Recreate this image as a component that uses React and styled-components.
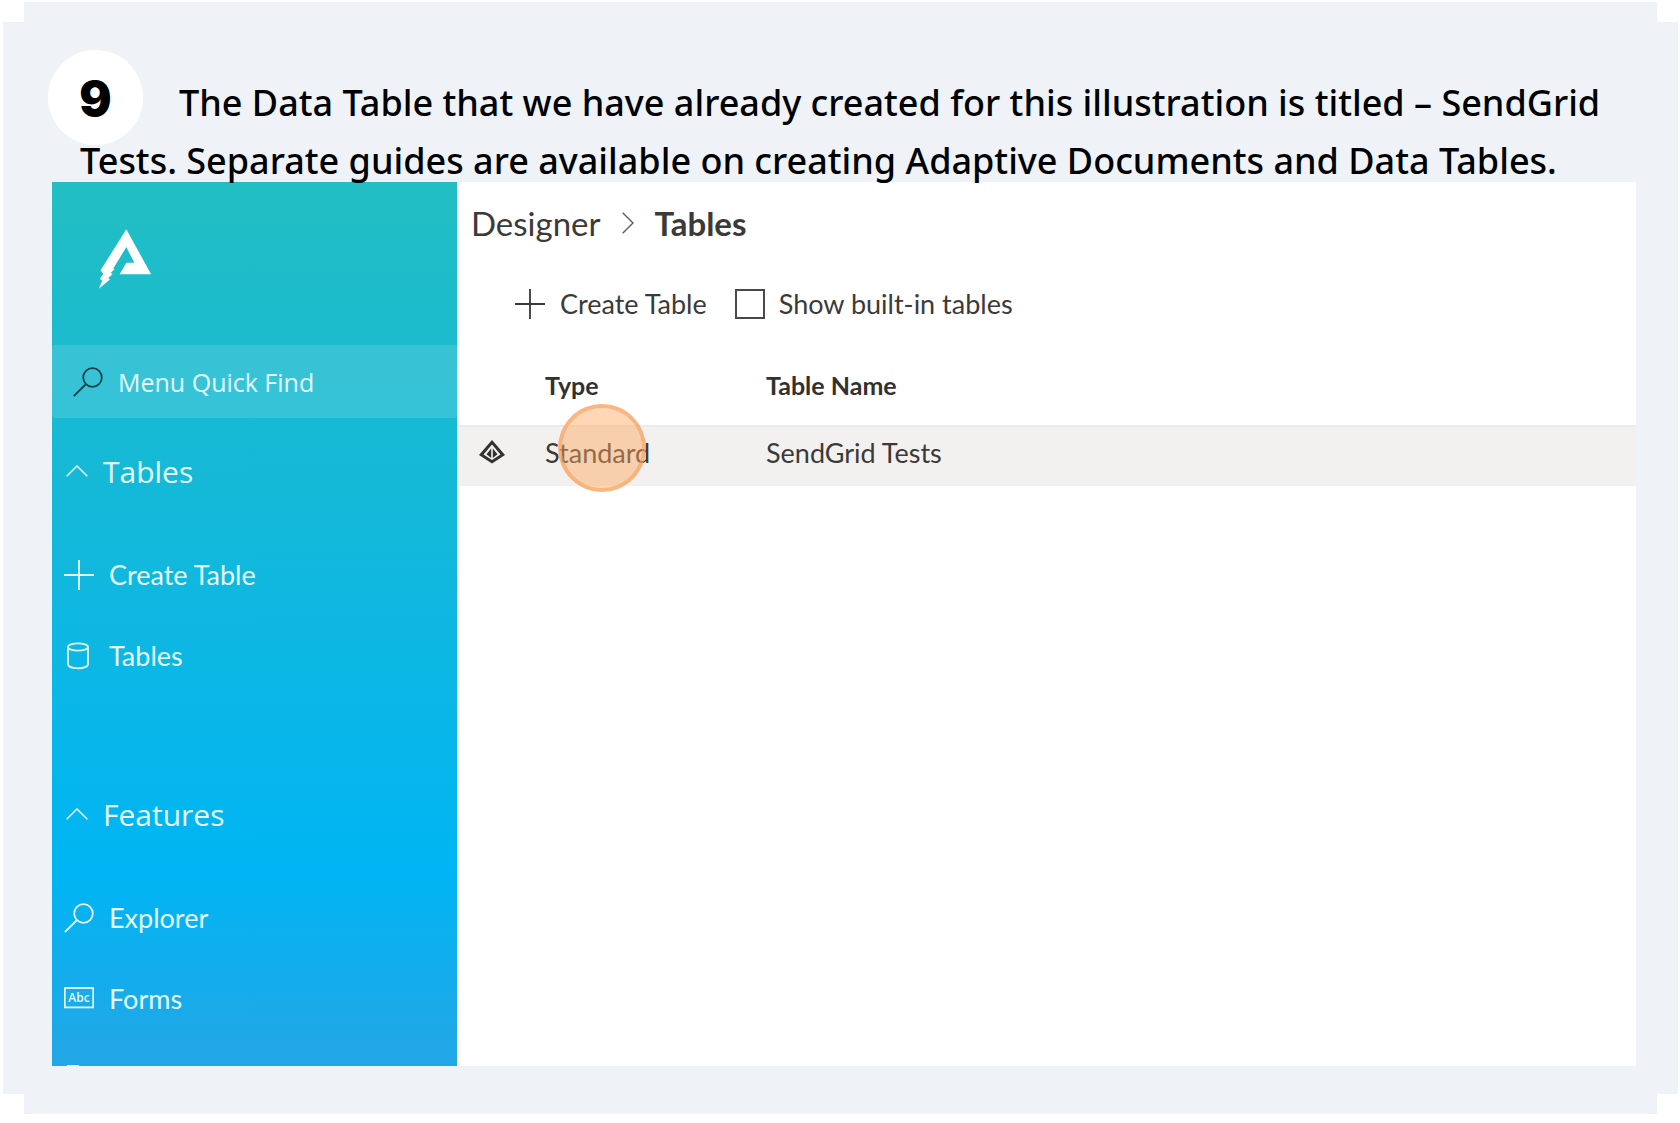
import React, { useState } from 'react';
import styled, { createGlobalStyle } from 'styled-components';

const GlobalStyle = createGlobalStyle`
  * {
    box-sizing: border-box;
  }

  body {
    margin: 0;
    background: #ffffff;
    font-family: Lato, 'Liberation Sans', sans-serif;
    overflow: hidden;
  }
`;

const menu = [
  {
    title: 'Tables',
    items: [
      { name: 'Create Table', icon: 'plus' },
      { name: 'Tables', icon: 'database' },
    ],
  },
  {
    title: 'Features',
    items: [
      { name: 'Explorer', icon: 'search' },
      { name: 'Forms', icon: 'form' },
      { name: '', icon: 'page' },
    ],
  },
];

const rows = [{ type: 'Standard', name: 'SendGrid Tests' }];

function Icon({ name }) {
  return (
    <SIcon viewBox="0 0 30 30" aria-hidden="true">
      {name === 'plus' && <path d="M15 0V30M0 15H30" />}
      {name === 'search' && (
        <>
          <circle cx="19.5" cy="10.5" r="9.3" />
          <path d="M13 17L0.8 29.2" />
        </>
      )}
      {name === 'database' && (
        <>
          <ellipse cx="14" cy="6" rx="10" ry="3.6" />
          <path d="M4 6V23C4 25.5 8 27.3 14 27.3S24 25.5 24 23V6" />
        </>
      )}
      {name === 'form' && (
        <>
          <rect x="0.8" y="4" width="28.4" height="19.4" />
          <text x="15" y="18">
            Abc
          </text>
        </>
      )}
      {name === 'page' && <path d="M4 29V0.8H14L24 10V29Z" />}
    </SIcon>
  );
}

function Logo() {
  return (
    <SLogo viewBox="176 149 158 179" role="img" aria-label="Home">
      <path d="M259 150L333 284H239L259 250H283L259 203L220 267L224 268L212 280L218 283L205 295L210 300L177 327L187 303L180 298L190 283L182 272Z" />
    </SLogo>
  );
}

function MenuGroup({ title, items }) {
  const [open, setOpen] = useState(true);

  return (
    <section>
      <SGroupButton aria-expanded={open} onClick={() => setOpen(!open)}>
        <SChevron viewBox="0 0 22 12" aria-hidden="true">
          <path d="M0.7 11.3L11 1L21.3 11.3" />
        </SChevron>
        {title}
      </SGroupButton>
      {open && (
        <SMenuList>
          {items.map(item => (
            <li key={item.icon}>
              <SMenuLink href="#">
                <Icon name={item.icon} />
                {item.name}
              </SMenuLink>
            </li>
          ))}
        </SMenuList>
      )}
    </section>
  );
}

export default function App() {
  const [builtIn, setBuiltIn] = useState(false);

  return (
    <>
      <GlobalStyle />
      <SStep>
        <SStepTitle>
          <SStepNumber>9</SStepNumber>
          The Data Table that we have already created for this illustration is titled – SendGrid Tests. Separate guides
          are available on creating Adaptive Documents and Data Tables.
        </SStepTitle>

        <SScreen>
          <SSidebar>
            <SLogoLink href="#">
              <Logo />
            </SLogoLink>
            <SSearch>
              <Icon name="search" />
              <SSearchInput type="text" placeholder="Menu Quick Find" aria-label="Menu Quick Find" />
            </SSearch>
            {menu.map(group => (
              <MenuGroup key={group.title} title={group.title} items={group.items} />
            ))}
          </SSidebar>

          <SContent>
            <SBreadcrumb>
              <SCrumb href="#">Designer</SCrumb>
              <SCrumbArrow viewBox="0 0 12 22" aria-hidden="true">
                <path d="M0.7 0.7L11 11L0.7 21.3" />
              </SCrumbArrow>
              <SCurrent>Tables</SCurrent>
            </SBreadcrumb>

            <SToolbar>
              <SToolButton>
                <Icon name="plus" />
                Create Table
              </SToolButton>
              <SCheckLabel>
                <SCheckbox type="checkbox" checked={builtIn} onChange={e => setBuiltIn(e.target.checked)} />
                Show built-in tables
              </SCheckLabel>
            </SToolbar>

            <STable>
              <thead>
                <tr>
                  <SHeadCell $width="88px" />
                  <SHeadCell $width="221px">Type</SHeadCell>
                  <SHeadCell>Table Name</SHeadCell>
                </tr>
              </thead>
              <tbody>
                {rows.map(row => (
                  <tr key={row.name}>
                    <SCell>
                      <SRowIcon viewBox="0 0 26 24" aria-hidden="true">
                        <path d="M13 0L26 15L13 23.5L0 15ZM13 4.5L4.5 14.5L13 20L21.5 14.5Z" fillRule="evenodd" />
                        <path d="M12.2 8.5V18L7.5 14.2ZM13.8 8.5V18L18.5 14.2Z" />
                      </SRowIcon>
                    </SCell>
                    <SCell>
                      {row.type}
                      <SClickMark />
                    </SCell>
                    <SCell>{row.name}</SCell>
                  </tr>
                ))}
              </tbody>
            </STable>
          </SContent>
        </SScreen>
      </SStep>
    </>
  );
}

const SStep = styled.main`
  display: flex;
  flex-direction: column;
  height: calc(100vh - 11px);
  margin: 2px 2px 9px 3px;
  padding: 72px 42px 48px 49px;
  background: #eff3f8;
  clip-path: polygon(
    21px 0,
    calc(100% - 21px) 0,
    calc(100% - 21px) 20px,
    100% 20px,
    100% calc(100% - 20px),
    calc(100% - 21px) calc(100% - 20px),
    calc(100% - 21px) 100%,
    21px 100%,
    21px calc(100% - 20px),
    0 calc(100% - 20px),
    0 20px,
    21px 20px
  );
`;

const SStepTitle = styled.h1`
  position: relative;
  z-index: 1;
  margin: 0 0 -8px;
  padding-left: 28px;
  font-family: 'Noto Sans', sans-serif;
  font-size: 36px;
  font-weight: 500;
  line-height: 58px;
  text-indent: 99px;
  color: #000000;
`;

const SStepNumber = styled.span`
  position: absolute;
  z-index: -1;
  top: -24px;
  left: -4px;
  display: flex;
  align-items: center;
  justify-content: center;
  width: 95px;
  height: 95px;
  padding-top: 3px;
  border-radius: 50%;
  background: #ffffff;
  font-family: Inter, sans-serif;
  font-size: 48px;
  font-weight: 900;
  line-height: 48px;
  text-indent: 0;
`;

const SScreen = styled.div`
  display: flex;
  flex: 1;
  min-height: 0;
  overflow: hidden;
  background: #ffffff;
`;

const SSidebar = styled.nav`
  flex: 0 0 405px;
  overflow: hidden;
  background: linear-gradient(#22bec3 0%, #12b8dc 42%, #00b5f4 78%, #24a6e6 100%);
  color: #e4fbff;
`;

const SLogoLink = styled.a`
  display: block;
  height: 163px;
  padding: 47px 46px;
`;

const SLogo = styled.svg`
  display: block;
  width: 54px;
  height: 60px;
  fill: #ffffff;
`;

const SIcon = styled.svg`
  flex: none;
  width: 30px;
  height: 30px;
  fill: none;
  stroke: currentColor;
  stroke-width: 1.8;

  text {
    fill: currentColor;
    stroke: none;
    font-family: 'Open Sans', sans-serif;
    font-size: 12px;
    font-weight: 600;
    text-anchor: middle;
  }
`;

const SSearch = styled.div`
  display: flex;
  align-items: center;
  gap: 15px;
  height: 73px;
  padding: 0 21px;
  border-radius: 3px;
  background: rgba(255, 255, 255, 0.13);
  color: #17414b;
`;

const SSearchInput = styled.input`
  flex: 1;
  min-width: 0;
  padding: 0;
  border: none;
  outline: none;
  background: none;
  font-family: 'Open Sans', sans-serif;
  font-size: 25px;
  color: #e4fbff;

  &::placeholder {
    color: #e4fbff;
    opacity: 1;
  }
`;

const SGroupButton = styled.button`
  display: flex;
  align-items: center;
  gap: 15px;
  width: 100%;
  height: 106px;
  padding: 0 14px;
  border: none;
  background: none;
  font-family: 'Open Sans', sans-serif;
  font-size: 30px;
  color: inherit;
  cursor: pointer;
`;

const SChevron = styled.svg`
  width: 22px;
  height: 12px;
  fill: none;
  stroke: currentColor;
  stroke-width: 1.5;
`;

const SMenuList = styled.ul`
  margin: 0;
  padding: 10px 0 65px;
  list-style: none;
`;

const SMenuLink = styled.a`
  display: flex;
  align-items: center;
  gap: 15px;
  height: 81px;
  padding: 0 12px;
  font-size: 27px;
  color: inherit;
  text-decoration: none;
`;

const SContent = styled.div`
  flex: 1;
  min-width: 0;
  padding-top: 21px;
  color: #3b3a39;
`;

const SBreadcrumb = styled.div`
  display: flex;
  align-items: center;
  gap: 21px;
  padding-left: 14px;
  font-size: 33px;
  line-height: 40px;
`;

const SCrumb = styled.a`
  color: inherit;
  text-decoration: none;
`;

const SCrumbArrow = styled.svg`
  width: 12px;
  height: 22px;
  fill: none;
  stroke: #605e5c;
  stroke-width: 1.4;
`;

const SCurrent = styled.span`
  font-weight: 700;
`;

const SToolbar = styled.div`
  display: flex;
  align-items: center;
  gap: 28px;
  margin: 45px 0 25px;
  padding-left: 58px;
  font-size: 27px;
  line-height: 32px;
`;

const SToolButton = styled.button`
  display: flex;
  align-items: center;
  gap: 15px;
  padding: 0;
  border: none;
  background: none;
  font: inherit;
  color: inherit;
  cursor: pointer;
`;

const SCheckLabel = styled.label`
  display: flex;
  align-items: center;
  gap: 14px;
`;

const SCheckbox = styled.input`
  appearance: none;
  width: 30px;
  height: 30px;
  margin: 0;
  border: 2px solid #4a4948;

  &:checked {
    background: #0078d4;
  }
`;

const STable = styled.table`
  width: 100%;
  table-layout: fixed;
  border-collapse: separate;
  border-spacing: 0;
  font-size: 27px;
  line-height: 32px;
  text-align: left;
`;

const SHeadCell = styled.th`
  width: ${({ $width }) => $width || 'auto'};
  height: 80px;
  padding: 0;
  font-size: 25px;
  font-weight: 700;
  color: #323130;
`;

const SCell = styled.td`
  position: relative;
  height: 61px;
  padding: 0 0 8px;
  border-top: 2px solid #edebea;
  background: #f2f1ef;
`;

const SRowIcon = styled.svg`
  display: block;
  width: 26px;
  height: 24px;
  margin: 0 0 2px 22px;
  fill: #323130;
`;

const SClickMark = styled.span`
  position: absolute;
  top: -23px;
  left: 13px;
  width: 88px;
  height: 88px;
  border: 4px solid rgba(247, 158, 84, 0.75);
  border-radius: 50%;
  background: rgba(255, 166, 94, 0.45);
  background-clip: padding-box;
`;
